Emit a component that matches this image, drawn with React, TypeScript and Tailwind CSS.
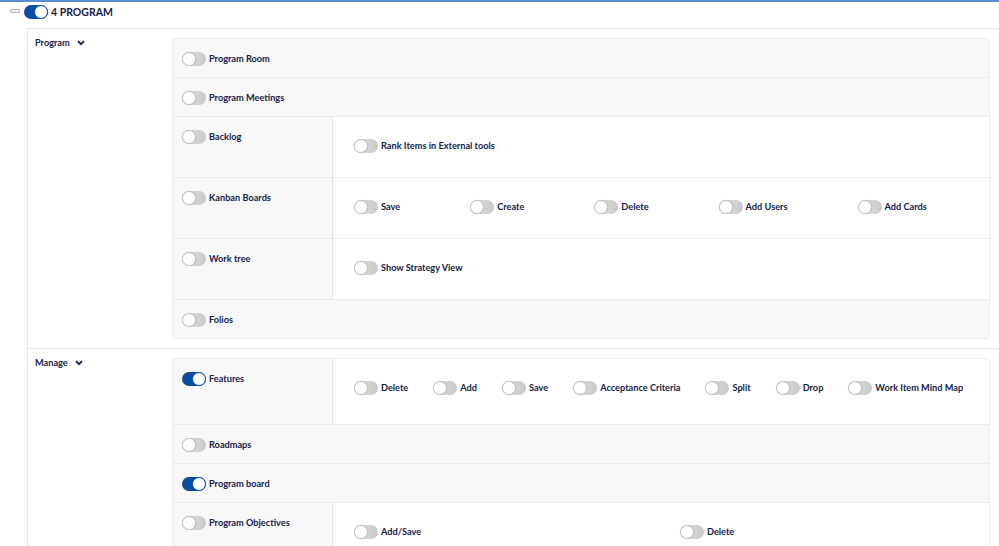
import React from "react";

type Sub = { label: string; on?: boolean };
type Row = {
  label: string;
  on?: boolean;
  subs?: Sub[];
  layout?: "wide" | "tight" | "half";
  tall?: boolean;
};

const program: Row[] = [
  { label: "Program Room" },
  { label: "Program Meetings" },
  { label: "Backlog", subs: [{ label: "Rank Items in External tools" }] },
  {
    label: "Kanban Boards",
    layout: "wide",
    subs: [
      { label: "Save" },
      { label: "Create" },
      { label: "Delete" },
      { label: "Add Users" },
      { label: "Add Cards" },
    ],
  },
  { label: "Work tree", subs: [{ label: "Show Strategy View" }] },
  { label: "Folios" },
];

const manage: Row[] = [
  {
    label: "Features",
    on: true,
    tall: true,
    layout: "tight",
    subs: [
      { label: "Delete" },
      { label: "Add" },
      { label: "Save" },
      { label: "Acceptance Criteria" },
      { label: "Split" },
      { label: "Drop" },
      { label: "Work Item Mind Map" },
    ],
  },
  { label: "Roadmaps" },
  { label: "Program board", on: true },
  {
    label: "Program Objectives",
    layout: "half",
    subs: [{ label: "Add/Save" }, { label: "Delete" }],
  },
];

function Toggle({ on }: { on?: boolean }) {
  return on ? (
    <span className="relative inline-block w-[24px] h-[14px] rounded-full bg-[#0b4da3] shrink-0">
      <span className="absolute right-0 top-0 w-[14px] h-[14px] rounded-full bg-white border border-[#0b4da3]" />
    </span>
  ) : (
    <span className="relative inline-block w-[24px] h-[14px] rounded-full bg-gradient-to-r from-[#e2e2e2] to-[#c9c9c9] shrink-0">
      <span className="absolute left-0 top-0 w-[14px] h-[14px] rounded-full bg-white border border-[#c4c4c4] shadow-[0_0_1px_rgba(0,0,0,0.2)]" />
    </span>
  );
}

function Item({ label, on }: Sub) {
  return (
    <div className="flex items-center gap-[3px] whitespace-nowrap h-[14px]">
      <Toggle on={on} />
      <span className="text-[9.2px] leading-[14px] font-bold text-[#14224a]">{label}</span>
    </div>
  );
}

function PanelRow({ row, last }: { row: Row; last: boolean }) {
  const border = last ? "" : "border-b border-[#ebebeb]";
  if (!row.subs) {
    return (
      <div className={`${last ? "h-[38px]" : "h-[39px]"} bg-[#f8f8f8] pl-[9px] pt-[13px] ${border}`}>
        <Item label={row.label} on={row.on} />
      </div>
    );
  }
  const subWrap =
    row.layout === "half"
      ? "grid grid-cols-[326px_1fr]"
      : row.layout === "wide"
        ? "flex gap-[70px]"
        : row.layout === "tight"
          ? "flex gap-[25px]"
          : "flex";
  return (
    <div className={`flex ${row.tall ? "h-[66px]" : "h-[61px]"} ${border}`}>
      <div className="w-[160px] shrink-0 bg-[#f8f8f8] border-r border-[#e3e3e3] pl-[9px] pt-[13px]">
        <Item label={row.label} on={row.on} />
      </div>
      <div className={`flex-1 bg-white pl-[21px] pt-[22px] items-start ${subWrap}`}>
        {row.subs.map((s) => (
          <Item key={s.label} label={s.label} on={s.on} />
        ))}
      </div>
    </div>
  );
}

function Section({ title, rows, last }: { title: string; rows: Row[]; last?: boolean }) {
  return (
    <div className={`flex pt-[9px] pb-[9px] ${last ? "" : "border-b border-[#e8e8e8]"}`}>
      <div className="w-[144px] shrink-0 pl-[7px]">
        <div className="flex items-center gap-[7px] h-[9px] text-[9.2px] leading-[9px] font-bold text-[#14224a]">
          <span>{title}</span>
          <svg width="8" height="6" viewBox="0 0 8 6">
            <path d="M1 1.2 L4 4.2 L7 1.2" fill="none" stroke="#14224a" strokeWidth="1.9" />
          </svg>
        </div>
      </div>
      <div className="flex-1 mr-[9px] border border-[#ebebeb] rounded-[3px] overflow-hidden">
        {rows.map((r, i) => (
          <PanelRow key={r.label} row={r} last={i === rows.length - 1} />
        ))}
      </div>
    </div>
  );
}

export default function App() {
  return (
    <div
      className="w-[999px] h-[546px] overflow-hidden bg-white border-t-[2px] border-[#5b8fd0]"
      style={{ fontFamily: "Lato, 'Open Sans', sans-serif" }}
    >
      {/* header */}
      <div className="h-[26px] flex items-start pt-[3px] pl-[10px]">
        <span className="w-[10px] h-[4px] mt-[4px] rounded-[1px] border border-[#b8b8b8] bg-[#eeeeee] mr-[4px]" />
        <Toggle on />
        <span className="ml-[3px] text-[10.5px] leading-[14px] font-bold text-[#14224a]">4 PROGRAM</span>
      </div>

      {/* content */}
      <div className="ml-[27px] border-l border-t border-[#e8e8e8]">
        <Section title="Program" rows={program} />
        <Section title="Manage" rows={manage} last />
      </div>
    </div>
  );
}
